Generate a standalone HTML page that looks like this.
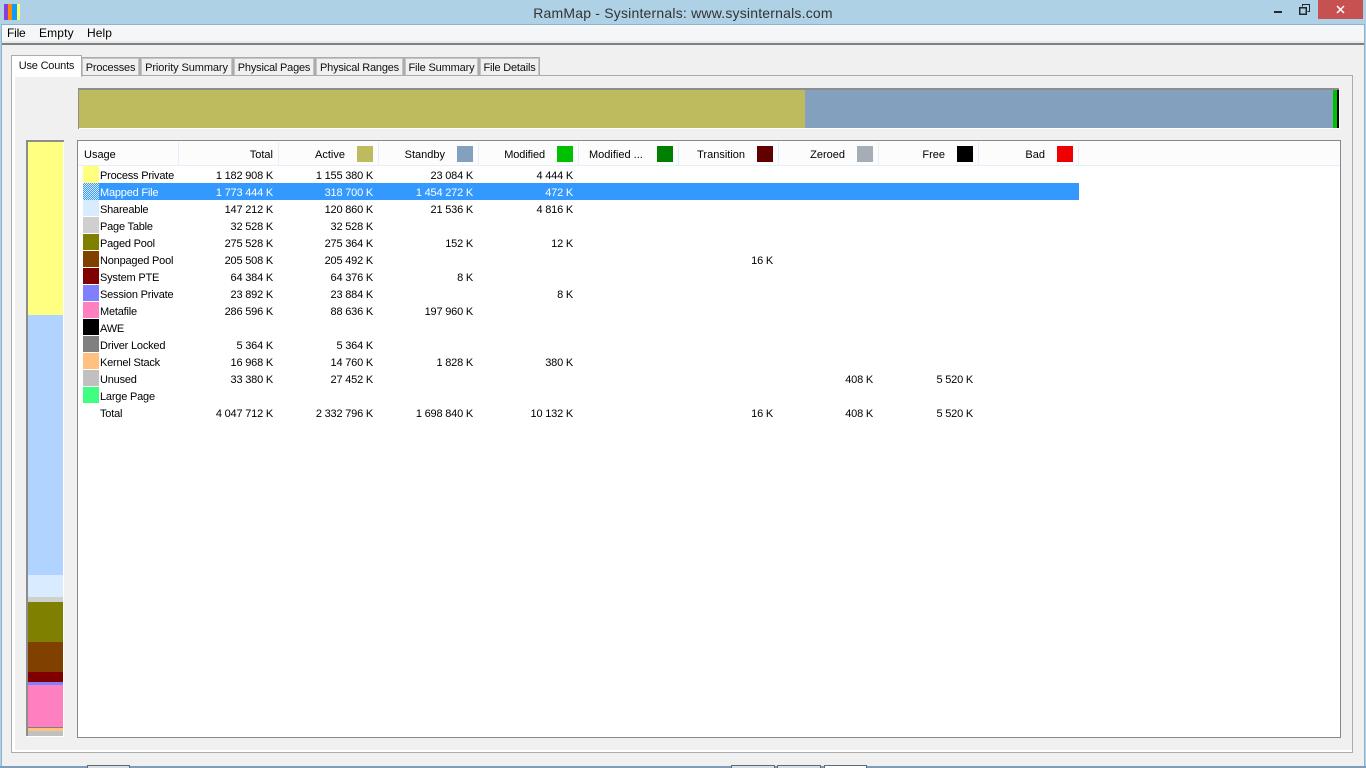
<!DOCTYPE html>
<html><head><meta charset="utf-8"><title>RamMap</title>
<style>
html,body{margin:0;padding:0;width:1366px;height:768px;overflow:hidden;background:#aed1e6}
body{position:relative;font:11px/17px "Liberation Sans",sans-serif;color:#000}
div,span{position:absolute;white-space:nowrap}
.tab{background:#f0f0f0;border:1px solid #acacac;box-shadow:inset 1px 0 0 #c4c4c4,inset -1px 0 0 #c4c4c4,inset 0 1px 0 #c4c4c4;border-bottom:0;box-sizing:border-box;height:18px;top:57px;line-height:20px;text-align:center;font-size:11px;color:#111;letter-spacing:-.2px}
.hd{top:146px;height:16px;line-height:18px}
.r{text-align:right}
.sep{top:142px;width:1px;height:23px;background:#e6eff9}
.hs{top:146px;width:16px;height:16px}
.sw{left:6px;top:0;width:16px;height:16px}
.row{left:77px;width:1262px;height:17px;line-height:21px}
.n{left:23px;letter-spacing:-.2px}
.c{width:100px;text-align:right;letter-spacing:-.2px}
.a{left:96px}.b{left:196px}.d{left:296px}.e{left:396px}.t{left:596px}.z{left:696px}.f{left:796px}
.s{position:absolute;left:1px;width:35px}
</style></head><body>
<div style="left:4px;top:4px;width:16px;height:16px;background:linear-gradient(90deg,#8a3fd6 0 4px,#ff8c00 4px 8px,#0a9cff 8px 13px,#ffff60 13px 16px)"></div>
<div style="left:0;right:0;top:5px;text-align:center;font-size:14px;line-height:16px;color:#333;letter-spacing:.2px">RamMap - Sysinternals: www.sysinternals.com</div>
<div style="left:1274px;top:11px;width:8px;height:2px;background:#22282c"></div>
<svg style="position:absolute;left:1299px;top:4px" width="11" height="11" viewBox="0 0 11 11"><path d="M3.5 2.5V.5H10.5V7.5H8.5" fill="none" stroke="#22282c"/><rect x=".75" y="3.75" width="6.5" height="6.5" fill="none" stroke="#22282c" stroke-width="1.5"/></svg>
<div style="left:1318px;top:0;width:45px;height:19px;background:#c75050"></div>
<svg style="position:absolute;left:1336px;top:5px" width="9" height="9" viewBox="0 0 9 9"><path d="M1 1L8 8M8 1L1 8" stroke="#fff" stroke-width="1.5"/></svg>

<div style="left:1px;top:24px;width:1364px;height:743px;background:#f0f0f0;border:1px solid #8fb3cc;border-bottom:0;box-sizing:border-box"></div>
<div style="left:2px;top:25px;width:1362px;height:17px;background:#f5f6f7"></div>
<div style="left:2px;top:41px;width:1362px;height:2px;background:#e9eaeb"></div>
<div style="left:2px;top:43px;width:1362px;height:2px;background:#7f7f7f"></div>
<div style="left:7px;top:25px;font-size:12px;line-height:17px;letter-spacing:-.2px">File</div>
<div style="left:39px;top:25px;font-size:12px;line-height:17px;letter-spacing:.15px">Empty</div>
<div style="left:87px;top:25px;font-size:12px;line-height:17px;letter-spacing:.1px">Help</div>

<div style="left:11px;top:75px;width:1342px;height:678px;border:1px solid #acacac;box-sizing:border-box;background:#fff"></div>
<div style="left:15px;top:77px;width:1337px;height:673px;background:#f0f0f0"></div>
<div style="left:12px;top:76px;width:1340px;height:1px;background:#f0f0f0"></div>
<div class="tab" style="left:81px;width:59px;letter-spacing:-.2px">Processes</div>
<div class="tab" style="left:140px;width:93px;letter-spacing:-.1px">Priority Summary</div>
<div class="tab" style="left:233px;width:82px;letter-spacing:-.2px">Physical Pages</div>
<div class="tab" style="left:315px;width:89px;letter-spacing:-.2px">Physical Ranges</div>
<div class="tab" style="left:404px;width:75px;letter-spacing:-.15px">File Summary</div>
<div class="tab" style="left:479px;width:61px">File Details</div>
<div style="left:11px;top:55px;width:71px;height:22px;background:#fff;border:1px solid #acacac;border-bottom:0;box-sizing:border-box;text-align:center;line-height:20px;letter-spacing:-.2px;color:#111">Use Counts</div>

<div style="left:78px;top:88px;width:1262px;height:41px;background:#fff"></div>
<div style="left:78px;top:88px;width:1261px;height:2px;background:#8d8d8d"></div>
<div style="left:78px;top:88px;width:1px;height:41px;background:#8d8d8d"></div>
<div style="left:79px;top:90px;width:726px;height:38px;background:#bdbb5e"></div>
<div style="left:805px;top:90px;width:528px;height:38px;background:#84a0bf"></div>
<div style="left:1333px;top:90px;width:4px;height:38px;background:#00c000"></div>
<div style="left:1337px;top:90px;width:2px;height:38px;background:#000"></div>

<div style="left:26px;top:140px;width:38px;height:597px;background:#fff">
<div style="left:0;top:0;width:38px;height:2px;background:#8d8d8d"></div>
<div style="left:0;top:0;width:2px;height:596px;background:#8d8d8d"></div>
<div class="s" style="left:2px;top:2px;height:173px;background:#ffff80"></div>
<div class="s" style="left:2px;top:175px;height:260px;background:#b0d4ff"></div>
<div class="s" style="left:2px;top:435px;height:22px;background:#d9ecff"></div>
<div class="s" style="left:2px;top:457px;height:5px;background:#cfcfcf"></div>
<div class="s" style="left:2px;top:462px;height:40px;background:#808000"></div>
<div class="s" style="left:2px;top:502px;height:30px;background:#804000"></div>
<div class="s" style="left:2px;top:532px;height:10px;background:#800000"></div>
<div class="s" style="left:2px;top:542px;height:3px;background:#8080ff"></div>
<div class="s" style="left:2px;top:545px;height:42px;background:#ff80c0"></div>
<div class="s" style="left:2px;top:587px;height:1px;background:#808080"></div>
<div class="s" style="left:2px;top:588px;height:3px;background:#ffc080"></div>
<div class="s" style="left:2px;top:591px;height:5px;background:#c0c0c0"></div>
</div>

<div style="left:77px;top:140px;width:1264px;height:598px;background:#fff;border:1px solid #828790;box-sizing:border-box"></div>
<div style="left:78px;top:141px;width:1262px;height:24px;background:#fcfcfc"></div>
<div style="left:78px;top:165px;width:1262px;height:1px;background:#e6eff9"></div>
<div class="sep" style="left:178px"></div><div class="sep" style="left:278px"></div><div class="sep" style="left:378px"></div><div class="sep" style="left:478px"></div><div class="sep" style="left:578px"></div><div class="sep" style="left:678px"></div><div class="sep" style="left:778px"></div><div class="sep" style="left:878px"></div><div class="sep" style="left:978px"></div><div class="sep" style="left:1078px"></div>
<div class="hd" style="left:84px">Usage</div>
<div class="hd r" style="left:173px;width:100px">Total</div>
<div class="hd r" style="left:245px;width:100px">Active</div>
<div class="hd r" style="left:345px;width:100px">Standby</div>
<div class="hd r" style="left:445px;width:100px;letter-spacing:-.1px">Modified</div>
<div class="hd" style="left:589px">Modified ...</div>
<div class="hd r" style="left:645px;width:100px">Transition</div>
<div class="hd r" style="left:745px;width:100px">Zeroed</div>
<div class="hd r" style="left:845px;width:100px">Free</div>
<div class="hd r" style="left:945px;width:100px">Bad</div>
<div class="hs" style="left:357px;background:#bdbb5e"></div>
<div class="hs" style="left:457px;background:#84a0bf"></div>
<div class="hs" style="left:557px;background:#00c000"></div>
<div class="hs" style="left:657px;background:#008000"></div>
<div class="hs" style="left:757px;background:#600000"></div>
<div class="hs" style="left:857px;background:#a5aeb8"></div>
<div class="hs" style="left:957px;background:#000"></div>
<div class="hs" style="left:1057px;background:#ee0000"></div>

<div class="row" style="top:166px"><div class="sw" style="height:17px;background:#ffff80"></div><span class="n">Process Private</span><span class="c a">1 182 908 K</span><span class="c b">1 155 380 K</span><span class="c d">23 084 K</span><span class="c e">4 444 K</span></div>
<div style="left:83px;top:183px;width:996px;height:17px;background:#3399ff"></div>
<svg style="position:absolute;left:83px;top:183px" width="16" height="17" shape-rendering="crispEdges"><path d="M0 .5H16M1 1.5H16M0 2.5H16M1 3.5H16M0 4.5H16M1 5.5H16M0 6.5H16M1 7.5H16M0 8.5H16M1 9.5H16M0 10.5H16M1 11.5H16M0 12.5H16M1 13.5H16M0 14.5H16M1 15.5H16M0 16.5H16" stroke="#d8ebff" stroke-width="1" stroke-dasharray="1 1" fill="none"/></svg>
<div class="row" style="top:183px;color:#fff"><span class="n">Mapped File</span><span class="c a">1 773 444 K</span><span class="c b">318 700 K</span><span class="c d">1 454 272 K</span><span class="c e">472 K</span></div>
<div class="row" style="top:200px"><div class="sw" style="background:#d9ecff"></div><span class="n">Shareable</span><span class="c a">147 212 K</span><span class="c b">120 860 K</span><span class="c d">21 536 K</span><span class="c e">4 816 K</span></div>
<div class="row" style="top:217px"><div class="sw" style="background:#cfcfcf"></div><span class="n">Page Table</span><span class="c a">32 528 K</span><span class="c b">32 528 K</span></div>
<div class="row" style="top:234px"><div class="sw" style="background:#808000"></div><span class="n">Paged Pool</span><span class="c a">275 528 K</span><span class="c b">275 364 K</span><span class="c d">152 K</span><span class="c e">12 K</span></div>
<div class="row" style="top:251px"><div class="sw" style="background:#804000"></div><span class="n">Nonpaged Pool</span><span class="c a">205 508 K</span><span class="c b">205 492 K</span><span class="c t">16 K</span></div>
<div class="row" style="top:268px"><div class="sw" style="background:#800000"></div><span class="n">System PTE</span><span class="c a">64 384 K</span><span class="c b">64 376 K</span><span class="c d">8 K</span></div>
<div class="row" style="top:285px"><div class="sw" style="background:#8080ff"></div><span class="n">Session Private</span><span class="c a">23 892 K</span><span class="c b">23 884 K</span><span class="c e">8 K</span></div>
<div class="row" style="top:302px"><div class="sw" style="background:#ff80c0"></div><span class="n">Metafile</span><span class="c a">286 596 K</span><span class="c b">88 636 K</span><span class="c d">197 960 K</span></div>
<div class="row" style="top:319px"><div class="sw" style="background:#000"></div><span class="n">AWE</span></div>
<div class="row" style="top:336px"><div class="sw" style="background:#808080"></div><span class="n">Driver Locked</span><span class="c a">5 364 K</span><span class="c b">5 364 K</span></div>
<div class="row" style="top:353px"><div class="sw" style="background:#ffc080"></div><span class="n">Kernel Stack</span><span class="c a">16 968 K</span><span class="c b">14 760 K</span><span class="c d">1 828 K</span><span class="c e">380 K</span></div>
<div class="row" style="top:370px"><div class="sw" style="background:#c0c0c0"></div><span class="n">Unused</span><span class="c a">33 380 K</span><span class="c b">27 452 K</span><span class="c z">408 K</span><span class="c f">5 520 K</span></div>
<div class="row" style="top:387px"><div class="sw" style="background:#40ff80"></div><span class="n">Large Page</span></div>
<div class="row" style="top:404px"><span class="n">Total</span><span class="c a">4 047 712 K</span><span class="c b">2 332 796 K</span><span class="c d">1 698 840 K</span><span class="c e">10 132 K</span><span class="c t">16 K</span><span class="c z">408 K</span><span class="c f">5 520 K</span></div>

<div style="left:0;top:766px;width:1366px;height:2px;background:#7f9db9"></div>
<div style="left:87px;top:765px;width:43px;height:3px;background:#d7dfe5;border:1px solid #5d6b77;border-bottom:0;box-sizing:border-box"></div>
<div style="left:731px;top:765px;width:44px;height:3px;background:#d7dfe5;border:1px solid #5d6b77;border-bottom:0;box-sizing:border-box"></div>
<div style="left:777px;top:765px;width:44px;height:3px;background:#d7dfe5;border:1px solid #5d6b77;border-bottom:0;box-sizing:border-box"></div>
<div style="left:824px;top:765px;width:43px;height:3px;background:#fff;border:1px solid #5d6b77;border-bottom:0;box-sizing:border-box"></div>
</body></html>
